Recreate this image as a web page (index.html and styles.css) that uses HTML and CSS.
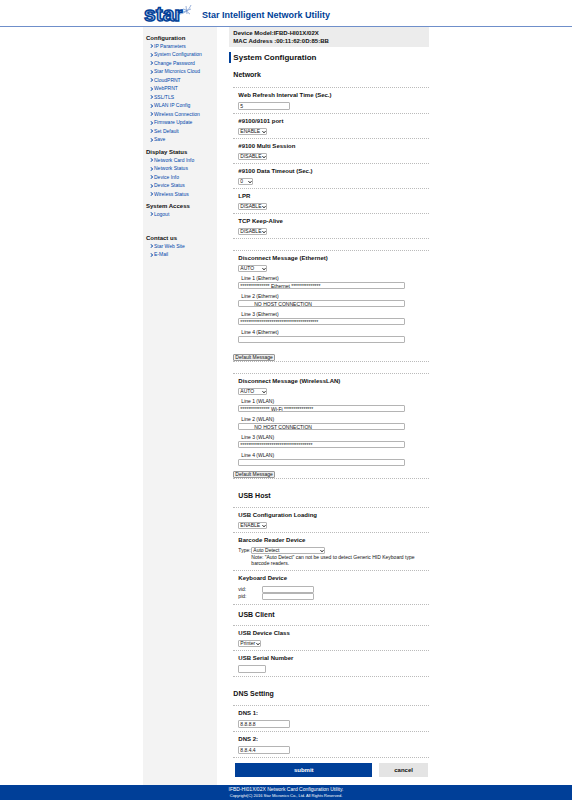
FILE: index.html
```
<!DOCTYPE html>
<html lang="en">
<head>
	<title>Star Intelligent Network Utility</title>
	<meta charset="utf-8">
	<link rel="stylesheet" href="styles.css">
</head>
<body>
<header class="header">
	<div class="wrap">
		<svg class="logo" viewBox="0 0 50 26" role="img" aria-label="Star">
			<text class="logo-text" x="1" y="20.5">star</text>
			<path class="logo-spark" d="M37 14C42 13 46 10 48 5M40 9c4 0 4 4 7 5M43 6l1 8M40 12l8-3"/>
		</svg>
		<p class="site-name">Star Intelligent Network Utility</p>
	</div>
</header>
<div class="wrap page">
	<nav class="side">
		<h2>Configuration</h2>
		<ul>
			<li><a href="#">IP Parameters</a></li>
			<li><a href="#">System Configuration</a></li>
			<li><a href="#">Change Password</a></li>
			<li><a href="#">Star Micronics Cloud</a></li>
			<li><a href="#">CloudPRNT</a></li>
			<li><a href="#">WebPRNT</a></li>
			<li><a href="#">SSL/TLS</a></li>
			<li><a href="#">WLAN IP Config</a></li>
			<li><a href="#">Wireless Connection</a></li>
			<li><a href="#">Firmware Update</a></li>
			<li><a href="#">Set Default</a></li>
			<li><a href="#">Save</a></li>
		</ul>
		<h2>Display Status</h2>
		<ul>
			<li><a href="#">Network Card Info</a></li>
			<li><a href="#">Network Status</a></li>
			<li><a href="#">Device Info</a></li>
			<li><a href="#">Device Status</a></li>
			<li><a href="#">Wireless Status</a></li>
		</ul>
		<h2>System Access</h2>
		<ul class="last">
			<li><a href="#">Logout</a></li>
		</ul>
		<h2>Contact us</h2>
		<ul>
			<li><a href="#">Star Web Site</a></li>
			<li><a href="#">E-Mail</a></li>
		</ul>
	</nav>
	<main class="main">
		<div class="device">
			<p>Device Model:IFBD-HI01X/02X</p>
			<p>MAC Address :00:11:62:0D:85:BB</p>
		</div>
		<h1>System Configuration</h1>
		<form>
			<h2 class="group first">Network</h2>
			<div class="row">
				<label class="name" for="refresh">Web Refresh Interval Time (Sec.)</label>
				<input type="text" id="refresh" value="5">
			</div>
			<div class="row">
				<label class="name" for="port">#9100/9101 port</label>
				<select id="port"><option>ENABLE</option><option>DISABLE</option></select>
			</div>
			<div class="row">
				<label class="name" for="multi">#9100 Multi Session</label>
				<select id="multi"><option>DISABLE</option><option>ENABLE</option></select>
			</div>
			<div class="row">
				<label class="name" for="timeout">#9100 Data Timeout (Sec.)</label>
				<select id="timeout" class="tiny"><option>0</option><option>60</option></select>
			</div>
			<div class="row">
				<label class="name" for="lpr">LPR</label>
				<select id="lpr"><option>DISABLE</option><option>ENABLE</option></select>
			</div>
			<div class="row">
				<label class="name" for="alive">TCP Keep-Alive</label>
				<select id="alive"><option>DISABLE</option><option>ENABLE</option></select>
			</div>
			<div class="spacer"></div>
			<div class="row message">
				<label class="name" for="eth">Disconnect Message (Ethernet)</label>
				<select id="eth"><option>AUTO</option></select>
				<div class="lines">
					<label for="eth1">Line 1 (Ethernet)</label>
					<input type="text" id="eth1" value="*************** Ethernet ***************">
					<label for="eth2">Line 2 (Ethernet)</label>
					<input type="text" id="eth2" value="          NO HOST CONNECTION">
					<label for="eth3">Line 3 (Ethernet)</label>
					<input type="text" id="eth3" value="****************************************">
					<label for="eth4">Line 4 (Ethernet)</label>
					<input type="text" id="eth4" value="">
				</div>
				<button type="button" class="default spaced">Default Message</button>
			</div>
			<div class="spacer"></div>
			<div class="row message">
				<label class="name" for="wlan">Disconnect Message (WirelessLAN)</label>
				<select id="wlan"><option>AUTO</option></select>
				<div class="lines">
					<label for="wlan1">Line 1 (WLAN)</label>
					<input type="text" id="wlan1" value="*************** Wi-Fi ***************">
					<label for="wlan2">Line 2 (WLAN)</label>
					<input type="text" id="wlan2" value="          NO HOST CONNECTION">
					<label for="wlan3">Line 3 (WLAN)</label>
					<input type="text" id="wlan3" value="*************************************">
					<label for="wlan4">Line 4 (WLAN)</label>
					<input type="text" id="wlan4" value="">
				</div>
				<button type="button" class="default">Default Message</button>
			</div>
			<h2 class="group ruled indent">USB Host</h2>
			<div class="row">
				<label class="name" for="usbconf">USB Configuration Loading</label>
				<select id="usbconf"><option>ENABLE</option><option>DISABLE</option></select>
			</div>
			<div class="row">
				<h3 class="name">Barcode Reader Device</h3>
				<div class="reader">
					<label for="reader">Type:</label>
					<div>
						<select id="reader" class="wide"><option>Auto Detect</option></select>
						<p>Note: "Auto Detect" can not be used to detect Generic HID Keyboard type barcode readers.</p>
					</div>
				</div>
			</div>
			<div class="row">
				<h3 class="name">Keyboard Device</h3>
				<div class="ids">
					<label for="vid">vid:</label>
					<input type="text" id="vid">
					<label for="pid">pid:</label>
					<input type="text" id="pid">
				</div>
			</div>
			<h2 class="group ruled indent close">USB Client</h2>
			<div class="row">
				<label class="name" for="usbclass">USB Device Class</label>
				<select id="usbclass" class="small"><option>Printer</option><option>Vendor</option></select>
			</div>
			<div class="row">
				<label class="name" for="serial">USB Serial Number</label>
				<input type="text" id="serial" class="short">
			</div>
			<h2 class="group ruled">DNS Setting</h2>
			<div class="row">
				<label class="name" for="dns1">DNS 1:</label>
				<input type="text" id="dns1" value="8.8.8.8">
			</div>
			<div class="row">
				<label class="name" for="dns2">DNS 2:</label>
				<input type="text" id="dns2" value="8.8.4.4">
			</div>
			<div class="actions">
				<button type="submit" class="submit">submit</button>
				<button type="reset" class="cancel">cancel</button>
			</div>
		</form>
	</main>
</div>
<footer class="footer">
	<p>IFBD-HI01X/02X Network Card Configuration Utility.</p>
	<p class="copy">Copyright(C) 2016 Star Micronics Co., Ltd. All Rights Reserved.</p>
</footer>
</body>
</html>
```
FILE: styles.css
```
*{box-sizing:border-box;}
body,h1,h2,h3,p,ul{margin:0;padding:0;}
ul{list-style:none;}
body{
	background:#fff;
	color:#111;
	font:5px/6px "Liberation Sans",Arial,sans-serif;
}
.wrap{
	width:50%;
	min-width:286px;
	margin:0 auto;
}

/* header */
.header{
	border-bottom:1px solid #6f8fca;
}
.header .wrap{
	display:flex;
	align-items:center;
	gap:9px;
	height:26px;
}
.logo{
	width:50px;
	height:26px;
}
.logo-text{
	font:bold 21px "Liberation Sans",Arial,sans-serif;
	fill:#a9c0e4;
	stroke:#003f98;
	stroke-width:1.5;
}
.logo-spark{
	fill:none;
	stroke:#6f8fca;
	stroke-width:.7;
}
.site-name{
	padding-top:4px;
	color:#003f98;
	font-size:9px;
	line-height:12px;
	font-weight:bold;
}

/* side menu */
.page{
	display:flex;
	gap:12px;
}
.side{
	flex:0 0 26%;
	padding:7px 3px;
	background:#f3f3f3;
}
.side h2{
	font-size:6px;
	line-height:8px;
}
.side ul{
	padding-left:3px;
	margin-bottom:4px;
}
.side .last{
	margin-bottom:16px;
}
.side li{
	line-height:8px;
}
.side li:nth-child(even){
	line-height:9px;
}
.side a{
	display:flex;
	align-items:center;
	gap:1px;
	color:#0046aa;
	text-decoration:none;
}
.side a:before{
	content:"";
	width:3px;
	height:3px;
	border:solid #0046aa;
	border-width:1px 1px 0 0;
	transform:rotate(45deg) scale(.7);
}

/* main column */
.main{
	flex:1;
	min-width:0;
}
.device{
	padding:2px 4px;
	background:#ececec;
	font-size:6px;
	line-height:8px;
	font-weight:bold;
}
h1{
	margin-top:5px;
	padding-left:2px;
	border-left:2px solid #003f98;
	font-size:8px;
	line-height:11px;
}
form{
	padding-left:4px;
}
.group{
	padding:12px 0;
	font-size:7px;
	line-height:8px;
}
.group.first{
	padding:8px 0;
}
.ruled{
	padding:13px 0 7px;
	border-top:1px dotted #bbb;
}
.indent{
	padding-left:5px;
}
.close{
	padding-top:6px;
	padding-bottom:6px;
}
.row{
	padding:3px 5px;
	border-top:1px dotted #bbb;
}
.name{
	display:block;
	margin-bottom:3px;
	font-size:6px;
	line-height:8px;
	font-weight:bold;
}
.spacer{
	height:12px;
	border-top:1px dotted #bbb;
}
input,select,button{
	font:5px/6px "Liberation Sans",Arial,sans-serif;
	color:#111;
}
input,select{
	display:block;
	background:#fff;
	border:1px solid #b4b4b4;
	border-radius:1px;
}
input{
	width:52px;
	height:8px;
	padding:0 1px;
}
select{
	appearance:none;
	width:29px;
	height:7px;
	padding:0 0 0 1px;
	line-height:5px;
	background:#fff url("data:image/svg+xml,%3Csvg xmlns='http://www.w3.org/2000/svg' viewBox='0 0 4 4'%3E%3Cpath d='M.5 1.2L2 2.8 3.5 1.2' fill='none' stroke='%23111'/%3E%3C/svg%3E") no-repeat right center/4px 4px;
}
.tiny{width:15px;}
.small{width:23px;}
.wide{width:74px;}
.short{width:28px;}

/* disconnect messages */
.message{
	padding-bottom:0;
}
.lines{
	width:90%;
	padding-top:3px;
}
.lines label{
	display:block;
	padding-left:3px;
	line-height:7px;
}
.lines input{
	width:100%;
	height:7px;
	margin-bottom:4px;
	white-space:pre;
}
.default{
	display:block;
	height:7px;
	margin:5px 0 0 -5px;
	padding:0 1px;
	line-height:5px;
	border:1px solid #999;
	border-radius:1px;
	background:#efefef;
}
.default.spaced{
	margin-top:11px;
}
.reader{
	display:flex;
	padding-bottom:1px;
}
.reader label{
	flex:none;
	width:13px;
	line-height:7px;
}
.ids{
	display:grid;
	grid-template-columns:24px 1fr;
	padding:1px 0;
	line-height:7px;
}
.ids input{
	height:7px;
}

.actions{
	display:flex;
	gap:7px;
	padding:5px 1px 8px 2px;
	border-top:1px dotted #bbb;
}
.actions button{
	height:14px;
	padding:0;
	border:0;
	font-size:6px;
	font-weight:bold;
}
.submit{
	flex:14;
	background:#003f98;
	color:#fff;
}
.cancel{
	flex:5;
	background:#e4e4e4;
}

.footer{
	padding:1px 0;
	background:#003f98;
	color:#fff;
	text-align:center;
	line-height:7px;
}
.copy{
	font-size:4px;
	line-height:6px;
}
```
